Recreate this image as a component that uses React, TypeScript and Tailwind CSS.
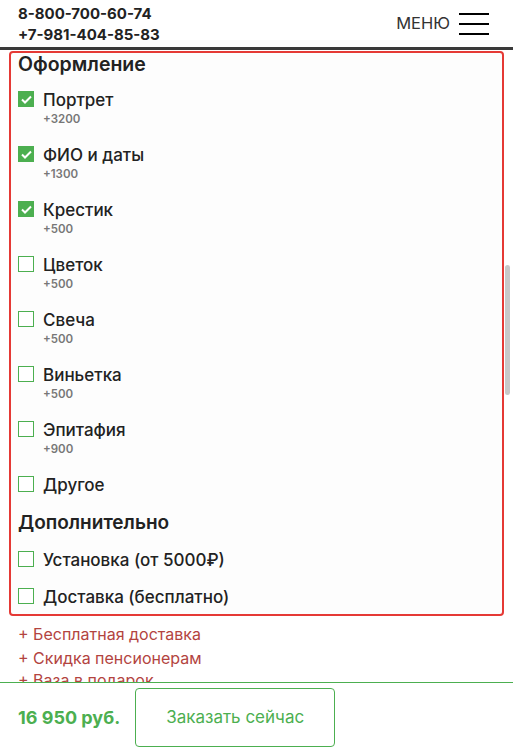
import React from "react";

const font = { fontFamily: "Inter, 'Open Sans', sans-serif" };

type Item = { label: string; price?: string; checked?: boolean };

const decor: Item[] = [
  { label: "Портрет", price: "+3200", checked: true },
  { label: "ФИО и даты", price: "+1300", checked: true },
  { label: "Крестик", price: "+500", checked: true },
  { label: "Цветок", price: "+500" },
  { label: "Свеча", price: "+500" },
  { label: "Виньетка", price: "+500" },
  { label: "Эпитафия", price: "+900" },
];

const Check = ({ checked }: { checked?: boolean }) =>
  checked ? (
    <span className="mt-px flex h-4 w-4 shrink-0 items-center justify-center bg-[#4caf50]">
      <svg width="11" height="9" viewBox="0 0 11 9" fill="none">
        <path d="M1 4.5 L4 7.5 L10 1.5" stroke="#fff" strokeWidth="2" />
      </svg>
    </span>
  ) : (
    <span className="mt-px block h-4 w-4 shrink-0 border border-[#4caf50] bg-white" />
  );

const Row = ({ item }: { item: Item }) => (
  <div className={item.price ? "flex h-[55px] gap-[9px]" : "flex gap-[9px]"}>
    <Check checked={item.checked} />
    <div>
      <div className="text-[17px] font-medium leading-5 text-[#222]">{item.label}</div>
      {item.price && (
        <div className="mt-[2px] text-[11.5px] font-semibold leading-[14px] text-[#777]">{item.price}</div>
      )}
    </div>
  </div>
);

export default function App() {
  return (
    <div className="relative flex h-[749px] flex-col overflow-hidden bg-white" style={font}>
      <header className="flex h-[50px] shrink-0 items-center justify-between border-b-[3px] border-[#3a3a3a] pl-[18px] pr-6">
        <div className="text-[15px] font-bold leading-[21px] text-[#222]">
          <div>8-800-700-60-74</div>
          <div>+7-981-404-85-83</div>
        </div>
        <div className="flex items-center gap-[9px]">
          <span className="text-[16.5px] text-[#333]">МЕНЮ</span>
          <div className="flex w-[30px] flex-col gap-2">
            <span className="block h-[2px] bg-black" />
            <span className="block h-[2px] bg-black" />
            <span className="block h-[2px] bg-black" />
          </div>
        </div>
      </header>

      <main className="flex-1 overflow-hidden">
        <div className="mx-[9px] mt-px rounded border-2 border-[#e53935] bg-[#fdfdfd] pb-[7px] pl-[7px]">
          <h2 className="text-[19.5px] font-semibold leading-[22px] text-[#222]">Оформление</h2>
          <div className="mt-[15px]">
            {decor.map((it) => (
              <Row key={it.label} item={it} />
            ))}
            <Row item={{ label: "Другое" }} />
          </div>
          <h2 className="mt-[17px] text-[19px] font-semibold leading-[22px] text-[#222]">Дополнительно</h2>
          <div className="mt-4">
            <Row item={{ label: "Установка (от 5000₽)" }} />
          </div>
          <div className="mt-[17px]">
            <Row item={{ label: "Доставка (бесплатно)" }} />
          </div>
        </div>
        <ul className="mt-2 pl-[18px] text-[16px] text-[#b3443f]">
          <li className="leading-5">+ Бесплатная доставка</li>
          <li className="mt-1 leading-5">+ Скидка пенсионерам</li>
          <li className="mt-[2px] leading-5">+ Ваза в подарок</li>
        </ul>
      </main>

      <footer className="flex h-[67px] shrink-0 items-start gap-[15px] border-t border-[#4caf50] bg-white pl-[18px] pt-[5px]">
        <span className="mt-[18px] text-[18px] font-bold leading-6 text-[#4caf50]">16 950 руб.</span>
        <button className="h-[59px] w-[200px] rounded border border-[#4caf50] text-[17px] text-[#4caf50]">
          Заказать сейчас
        </button>
      </footer>

      <div className="absolute right-[3px] top-[265px] h-[130px] w-[5px] rounded-full bg-[#c8c8c8]" />
    </div>
  );
}
